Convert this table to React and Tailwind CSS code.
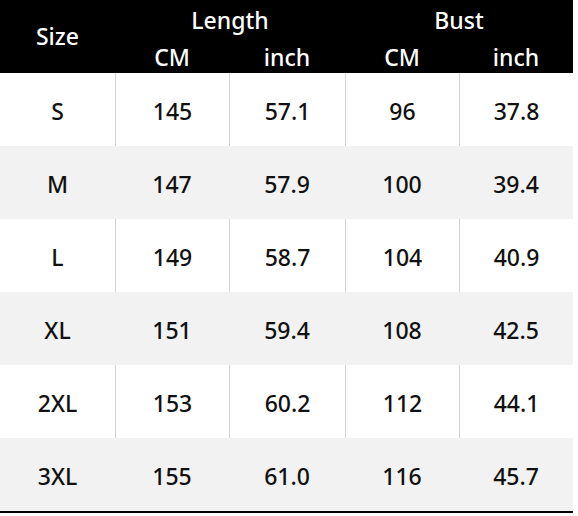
import React from 'react';

const rows = [
  ['S', '145', '57.1', '96', '37.8'],
  ['M', '147', '57.9', '100', '39.4'],
  ['L', '149', '58.7', '104', '40.9'],
  ['XL', '151', '59.4', '108', '42.5'],
  ['2XL', '153', '60.2', '112', '44.1'],
  ['3XL', '155', '61.0', '116', '45.7'],
];

export default function App() {
  return (
    <div className="w-[578px] h-[516px] bg-white" style={{ fontFamily: '"Noto Sans", "Open Sans", sans-serif' }}>
      <div className="w-[573px]">
        {/* Header */}
        <div className="grid grid-cols-[115px_114px_116px_114px_114px] grid-rows-[38px_35px] bg-black text-white text-[23px] font-medium leading-none">
          <div className="row-span-2 flex items-center justify-center pb-[1px]">Size</div>
          <div className="col-span-2 flex items-center justify-center pt-[3px]">Length</div>
          <div className="col-span-2 flex items-center justify-center pt-[3px]">Bust</div>
          <div className="flex items-center justify-center pt-[4px]">CM</div>
          <div className="flex items-center justify-center pt-[4px]">inch</div>
          <div className="flex items-center justify-center pt-[4px]">CM</div>
          <div className="flex items-center justify-center pt-[4px]">inch</div>
        </div>

        {/* Body */}
        {rows.map((r, i) => {
          const gray = i % 2 === 1;
          return (
            <div
              key={r[0]}
              className={`grid grid-cols-[115px_114px_116px_114px_114px] h-[73px] text-[23px] font-medium text-[#111] ${gray ? 'bg-[#f2f2f2]' : 'bg-white'}`}
            >
              {r.map((v, j) => (
                <div
                  key={j}
                  className={`flex items-center justify-center pt-[3px] ${!gray && j > 0 ? 'border-l border-[#d4d4d4]' : ''}`}
                >
                  {v}
                </div>
              ))}
            </div>
          );
        })}
        <div className="h-[2px] bg-black" />
      </div>
    </div>
  );
}
